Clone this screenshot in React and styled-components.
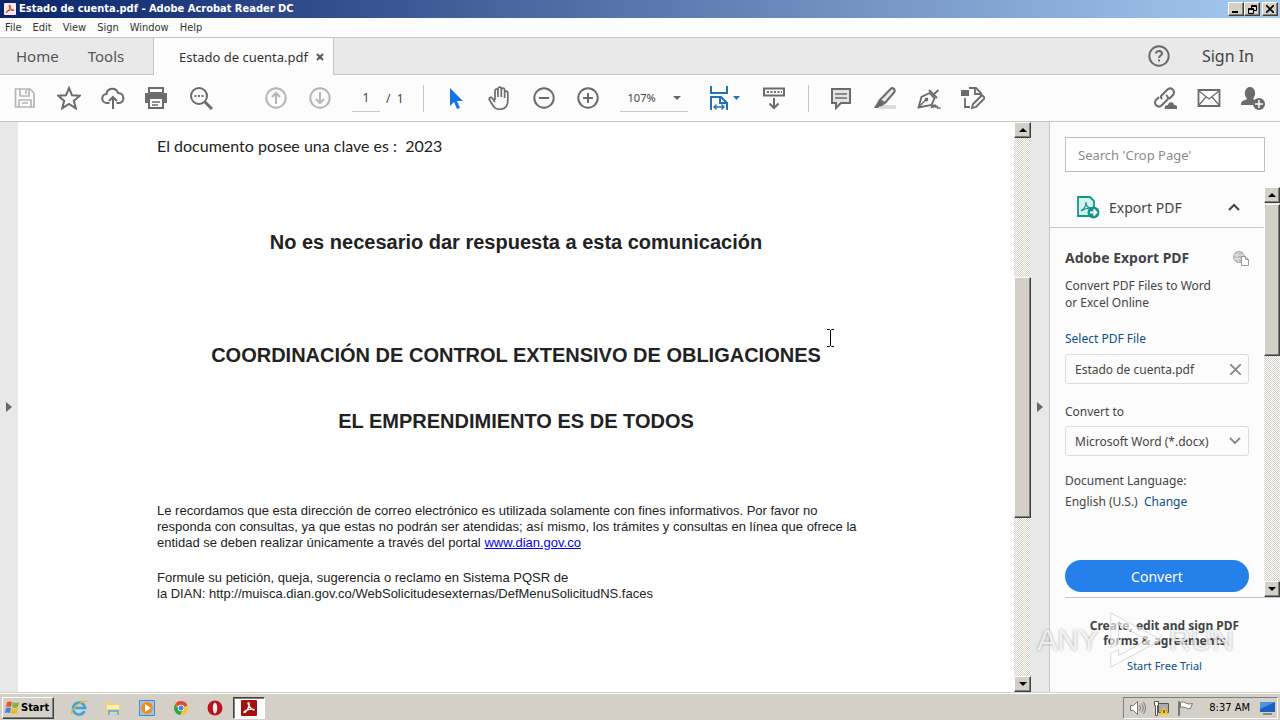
import React from "react";
import styled, { createGlobalStyle } from "styled-components";

const ui = `"Noto Sans", "Open Sans", sans-serif`;
const tahoma = `"DejaVu Sans Condensed", "DejaVu Sans", sans-serif`;

const Global = createGlobalStyle`
  * { box-sizing: border-box; }
  body { margin: 0; font-family: ${ui}; color: #444; background: #fff; }
  button, input, select { font: inherit; color: inherit; margin: 0; }
  button { border: 0; padding: 0; background: none; cursor: pointer; }
  h1, h2, h3, p { margin: 0; }
  a { color: #0d4f8c; text-decoration: none; }
  svg { display: block; flex: none; }
`;

const Screen = styled.div`
  position: relative;
  min-height: 100vh;
  display: flex;
  flex-direction: column;
`;

const TitleBar = styled.header`
  height: 18px;
  display: flex;
  align-items: center;
  gap: 3px;
  padding: 0 2px 0 4px;
  background: linear-gradient(90deg, #0a246a, #a6caf0);
  color: #fff;
`;
const WindowTitle = styled.h1`
  flex: 1;
  font: bold 11px/16px ${tahoma};
`;
const WindowButtons = styled.div`
  display: flex;
`;
const bevel = `
  background: #d4d0c8;
  border: 1px solid;
  border-color: #fff #404040 #404040 #fff;
  box-shadow: inset -1px -1px 0 #808080;
`;
const CaptionButton = styled.button`
  ${bevel}
  width: 16px;
  height: 14px;
  display: grid;
  place-items: center;
  margin-left: ${(p) => (p.$apart ? "2px" : "0")};
`;

const MenuBar = styled.nav`
  display: flex;
  gap: 11px;
  height: 20px;
  padding: 0 5px;
  background: #fcfcfc;
  border-bottom: 1px solid #c8c8c8;
`;
const MenuItem = styled.button`
  font: 11px/20px ${tahoma};
  color: #333;
`;

const TabBar = styled.div`
  display: flex;
  height: 37px;
  background: #e9e9e9;
`;
const HomeTabs = styled.div`
  width: 154px;
  display: flex;
  gap: 29px;
  padding-left: 16px;
  border-right: 1px solid #c6c6c6;
  border-bottom: 1px solid #c6c6c6;
`;
const Tab = styled.button`
  font-size: 15px;
  color: #555;
`;
const ActiveTab = styled.div`
  width: 180px;
  display: flex;
  align-items: center;
  gap: 8px;
  padding-left: 25px;
  background: #fcfcfc;
  border-right: 1px solid #c6c6c6;
  font-size: 13px;
  color: #333;
  white-space: nowrap;
`;
const Account = styled.div`
  flex: 1;
  display: flex;
  justify-content: flex-end;
  align-items: center;
  gap: 31px;
  padding-right: 26px;
  border-bottom: 1px solid #c6c6c6;
`;
const SignIn = styled.button`
  font-size: 16px;
  color: #444;
`;
const IconButton = styled.button`
  flex: none;
  display: grid;
  place-items: center;
  color: #6b6b6b;
`;

const Toolbar = styled.div`
  height: 47px;
  display: flex;
  align-items: center;
  padding: 0 15px 0 13px;
  background: #fcfcfc;
  border-bottom: 1px solid #c6c6c6;
`;
const ToolGroup = styled.div`
  display: flex;
  align-items: center;
  gap: 20px;
  margin-left: ${(p) => p.$before || 0}px;
`;
const Push = styled.div`
  flex: 1;
`;
const Divider = styled.span`
  width: 1px;
  height: 27px;
  margin-left: ${(p) => p.$before}px;
  background: #c6c6c6;
`;
const PageField = styled.label`
  display: flex;
  align-items: center;
  gap: 6px;
  margin-left: 20px;
  font-size: 12px;
  line-height: 27px;
  white-space: pre;
`;
const PageInput = styled.input`
  width: 28px;
  height: 27px;
  padding: 0;
  border: 0;
  border-bottom: 1px solid #c6c6c6;
  background: none;
  text-align: center;
`;
const ZoomField = styled.div`
  display: flex;
  align-items: center;
  width: 68px;
  margin-left: 20px;
  padding-right: 7px;
  border-bottom: 1px solid #c6c6c6;
  color: #666;
`;
const ZoomSelect = styled.select`
  flex: 1;
  min-width: 0;
  height: 26px;
  padding: 0 0 0 8px;
  border: 0;
  background: none;
  appearance: none;
  font-size: 11px;
  color: #444;
`;

const Workspace = styled.main`
  flex: 1;
  display: flex;
`;
const Gutter = styled.button`
  width: ${(p) => p.$width}px;
  flex: none;
  display: grid;
  place-items: center;
  background: #e8e8e8;
  border-right: ${(p) => (p.$edge ? "1px solid #c6c6c6" : "0")};
`;
const Page = styled.article`
  flex: 1;
  padding: 13px 139px 24px;
  background: #fff;
  color: #222;
`;
const KeyLine = styled.p`
  font: 16px/22px Lato, sans-serif;
  white-space: pre;
`;
const Notice = styled.h2`
  margin-top: ${(p) => p.$before}px;
  text-align: center;
  font: bold 20px/24px "Liberation Sans", Arial, sans-serif;
  white-space: nowrap;
`;
const Fine = styled.p`
  margin-top: ${(p) => p.$before}px;
  font: 13px/16px "Liberation Sans", Arial, sans-serif;
  white-space: nowrap;
`;
const DocLink = styled.a`
  color: #00e;
  text-decoration: underline;
`;

const ScrollTrack = styled.div`
  width: ${(p) => p.$width}px;
  flex: none;
  display: flex;
  flex-direction: column;
  background: repeating-conic-gradient(#d4d0c8 0 25%, #fff 0 50%) 0 0 / 2px 2px;
`;
const ScrollArrow = styled.button`
  ${bevel}
  height: 16px;
  flex: none;
  display: grid;
  place-items: center;
`;
const Space = styled.div`
  flex: ${(p) => p.$grow};
`;
const Thumb = styled.div`
  ${bevel}
  flex: ${(p) => p.$grow};
`;

const Panel = styled.aside`
  width: 230px;
  flex: none;
  display: flex;
  flex-direction: column;
  background: #fcfcfc;
  font-size: 12px;
`;
const Search = styled.input`
  height: 35px;
  margin: 15px;
  padding: 0 12px;
  border: 1px solid #bdbdbd;
  background: #fff;
  font-size: 13px;
  &::placeholder { color: #8c8c8c; opacity: 1; }
`;
const PanelBody = styled.div`
  flex: 1;
  display: flex;
`;
const PanelScroll = styled.div`
  flex: 1;
  min-width: 0;
`;
const ExportHeader = styled.button`
  width: 100%;
  height: 41px;
  display: flex;
  align-items: center;
  gap: 9px;
  padding: 0 24px 0 26px;
  border-bottom: 1px solid #c6c6c6;
  font-size: 14px;
  text-align: left;
`;
const Grow = styled.span`
  flex: 1;
`;
const Form = styled.form`
  display: flex;
  flex-direction: column;
  padding: 20px 15px 4px;
  line-height: 17px;
  white-space: nowrap;
`;
const FormTitle = styled.h2`
  display: flex;
  justify-content: space-between;
  align-items: center;
  font-size: 14px;
  line-height: 20px;
  margin-bottom: 9px;
`;
const Line = styled.p`
  margin-top: ${(p) => p.$before || 0}px;
`;
const FieldLabel = styled.label`
  margin: 19px 0 6px;
`;
const Field = styled.div`
  display: flex;
  align-items: center;
  height: 30px;
  padding: 0 7px 0 9px;
  border: 1px solid #dcdcdc;
  border-radius: 3px;
  color: #888;
`;
const FileName = styled.span`
  flex: 1;
  color: #444;
`;
const FormatSelect = styled.select`
  flex: 1;
  min-width: 0;
  padding: 0;
  border: 0;
  background: none;
  appearance: none;
  color: #444;
`;
const ConvertButton = styled.button`
  height: 32px;
  margin-top: 50px;
  border-radius: 16px;
  background: #2680eb;
  color: #fff;
  font-size: 14px;
`;
const Promo = styled.section`
  height: 95px;
  margin-left: 15px;
  padding: 20px 16px 0 0;
  border-top: 1px solid #c6c6c6;
  text-align: center;
  font-size: 11px;
  line-height: 15px;
`;
const PromoTitle = styled.h3`
  font-size: 12px;
  line-height: 15px;
  margin-bottom: 10px;
`;

const Watermark = styled.div`
  position: absolute;
  right: 46px;
  bottom: 48px;
  display: flex;
  align-items: center;
  gap: 6px;
  font: 30px/64px "Liberation Sans", Arial, sans-serif;
  color: rgba(255, 255, 255, 0.8);
  text-shadow: 0 0 3px rgba(0, 0, 0, 0.35);
  pointer-events: none;
`;

const Taskbar = styled.footer`
  height: 28px;
  display: flex;
  align-items: center;
  padding: 2px 2px 0;
  background: #d4d0c8;
  border-top: 1px solid #d4d0c8;
  box-shadow: inset 0 1px 0 #fff;
`;
const StartButton = styled.button`
  ${bevel}
  width: 52px;
  height: 22px;
  display: flex;
  align-items: center;
  gap: 1px;
  padding-left: 1px;
  margin-right: 9px;
  font: bold 11px/16px ${tahoma};
  color: #000;
`;
const TaskButton = styled.button`
  width: 32px;
  height: 22px;
  margin-right: 2px;
  display: grid;
  place-items: center;
  ${(p) =>
    p.$active &&
    `background: #fff; border: 1px solid; border-color: #404040 #fff #fff #404040; box-shadow: inset 1px 1px 0 #808080;`}
`;
const Tray = styled.div`
  height: 22px;
  display: flex;
  align-items: center;
  gap: 7px;
  padding: 0 1px 0 5px;
  border: 1px solid;
  border-color: #808080 #fff #fff #808080;
  font: 11px/16px ${tahoma};
  color: #000;
`;
const Clock = styled.time`
  margin: 0 2px 0 8px;
`;

const Icon = ({ size = 24, w = 2, children, ...rest }) => (
  <svg width={size} height={size} viewBox="0 0 24 24" fill="none" stroke="currentColor" strokeWidth={w} aria-hidden="true" {...rest}>
    {children}
  </svg>
);
const Triangle = ({ points, w = 8, h = 8, color = "#000" }) => (
  <svg width={w} height={h} viewBox="0 0 8 8" preserveAspectRatio="none" fill={color} aria-hidden="true">
    <path d={points} />
  </svg>
);
const UP = "M0 6L4 2L8 6Z";
const DOWN = "M0 2L4 6L8 2Z";
const RIGHT = "M0 0L8 4L0 8Z";

const AcrobatMark = ({ size, bg, fg }) => (
  <svg width={size} height={size} viewBox="0 0 16 16" aria-hidden="true">
    <rect width="16" height="16" rx="1" fill={bg} />
    <path d="M3 12.500C2 11 9.500 8 13 9.500C14 11 8 8.500 7 3.500C7 1.500 9 3 8 6C7 9 4.500 13 3 12.500Z" fill="none" stroke={fg} strokeWidth="1.300" />
  </svg>
);

const FileTools = () => (
  <ToolGroup>
    <IconButton aria-label="Save">
      <Icon color="#b5b5b5" w={1.7}>
        <path d="M2.500 3h14.500l4 4v14H2.500zM7 3v7h9V3M13 4v4M6 21v-7h12v7M9 17h6" />
      </Icon>
    </IconButton>
    <IconButton aria-label="Star">
      <Icon><path d="M12 2l3 7.300 7.800.500-6 5 2 7.500L12 18l-6.800 4.300 2-7.500-6-5L9 9.300z" /></Icon>
    </IconButton>
    <IconButton aria-label="Upload">
      <Icon><path d="M8.500 17H6a4.500 4.500 0 0 1-.500-9C6.500 1.500 15 1 17 7c7 0 7 10 1 10h-2.500M12 23V11M8 15l4-4 4 4" /></Icon>
    </IconButton>
    <IconButton aria-label="Print">
      <Icon>
        <path d="M4 2h14v5H4z" />
        <path d="M0 7h22v10h-4v-4H4v4H0z" fill="currentColor" stroke="none" />
        <path d="M4 13v9h14v-9" /><path d="M7 16h8M7 19h6" strokeWidth="1.500" />
      </Icon>
    </IconButton>
    <IconButton aria-label="Find">
      <Icon>
        <circle cx="10" cy="10" r="8" /><path d="M16 16l7 7" strokeWidth="3" />
        <path d="M5.500 10h2M9 10h2M12.500 10h2" />
      </Icon>
    </IconButton>
  </ToolGroup>
);

const CircleIcon = ({ d, color, label, w = 2 }) => (
  <IconButton aria-label={label}>
    <Icon color={color} w={w}><circle cx="12" cy="12" r="9.700" /><path d={d} /></Icon>
  </IconButton>
);

const Scrollbar = ({ width, parts }) => (
  <ScrollTrack $width={width}>
    <ScrollArrow aria-label="Scroll up"><Triangle points={UP} /></ScrollArrow>
    <Space $grow={parts[0]} />
    <Thumb $grow={parts[1]} />
    <Space $grow={parts[2]} />
    <ScrollArrow aria-label="Scroll down"><Triangle points={DOWN} /></ScrollArrow>
  </ScrollTrack>
);

const Cursor = styled.svg`
  position: absolute;
  left: 826px;
  top: 329px;
  pointer-events: none;
`;

export default function App() {
  return (
    <Screen>
      <Global />
      <TitleBar>
        <AcrobatMark size={12} bg="#fbe9e7" fg="#c8201a" />
        <WindowTitle>Estado de cuenta.pdf - Adobe Acrobat Reader DC</WindowTitle>
        <WindowButtons>
          <CaptionButton aria-label="Minimize"><svg width="8" height="8"><path d="M0 7h6" stroke="#000" strokeWidth="2" /></svg></CaptionButton>
          <CaptionButton aria-label="Restore"><svg width="9" height="9" fill="none" stroke="#000"><path d="M3.500 3V.500h5v5H6M3 1.500h6M.500 3.500h5v5h-5zM0 4.500h6" /></svg></CaptionButton>
          <CaptionButton $apart aria-label="Close"><svg width="8" height="8" stroke="#000" strokeWidth="1.600"><path d="M0 0L8 8M8 0L0 8" /></svg></CaptionButton>
        </WindowButtons>
      </TitleBar>
      <MenuBar>
        {["File", "Edit", "View", "Sign", "Window", "Help"].map((m) => <MenuItem key={m}>{m}</MenuItem>)}
      </MenuBar>
      <TabBar>
        <HomeTabs><Tab>Home</Tab><Tab>Tools</Tab></HomeTabs>
        <ActiveTab>
          Estado de cuenta.pdf
          <IconButton aria-label="Close tab"><svg width="8" height="8" stroke="#555" strokeWidth="2"><path d="M1 1L7 7M7 1L1 7" /></svg></IconButton>
        </ActiveTab>
        <Account>
          <IconButton aria-label="Help">
            <Icon><circle cx="12" cy="12" r="9.700" /><path d="M9 9.500c0-3.500 6-3.200 6 0C15 11.500 12 11.500 12 14M12 15.500v2" /></Icon>
          </IconButton>
          <SignIn>Sign In</SignIn>
        </Account>
      </TabBar>
      <Toolbar>
        <FileTools />
        <ToolGroup $before={51}>
          <CircleIcon label="Previous page" color="#b5b5b5" d="M12 18V7M8 11l4-4 4 4" />
          <CircleIcon label="Next page" color="#b5b5b5" d="M12 6v11M8 13l4 4 4-4" />
        </ToolGroup>
        <PageField>
          <PageInput aria-label="Page number" defaultValue="1" />
          {"/  1"}
        </PageField>
        <Divider $before={19} />
        <ToolGroup $before={20}>
          <IconButton aria-label="Select">
            <Icon><path d="M6 2v18l4-4 3 7 3-1-3-7h6z" fill="#1473e6" stroke="none" /></Icon>
          </IconButton>
          <IconButton aria-label="Hand">
            <Icon w={1.7}><path d="M7 14V5c0-2.500 3-2.500 3 0v6V3c0-2.500 3.300-2.500 3.300 0v8V4c0-2.500 3.300-2.500 3.300 0v8V7c0-2.500 3.200-2.500 3.200 0v8c0 10-12 10-14.500 5L1.500 14c-1-2.500 1.500-3.500 3-1.500L7 16" /></Icon>
          </IconButton>
          <CircleIcon label="Zoom out" d="M7 12h10" />
          <CircleIcon label="Zoom in" d="M7 12h10M12 7v10" />
        </ToolGroup>
        <ZoomField>
          <ZoomSelect aria-label="Zoom level"><option>107%</option></ZoomSelect>
          <Triangle points={DOWN} color="#666" />
        </ZoomField>
        <ToolGroup $before={20}>
          <IconButton aria-label="Fit width">
            <svg width="32" height="26" viewBox="0 0 32 26" fill="none" stroke="#2272b9" strokeWidth="2">
              <path d="M3 1v7h16V1M3 25V12h10l6 6v7M12 12v6h6" />
              <path d="M6 22h10M8.500 19.500L6 22l2.500 2.500M13.500 19.500L16 22l-2.500 2.500" strokeWidth="1.300" />
              <path d="M25 11h7l-3.500 4z" fill="#2272b9" stroke="none" />
            </svg>
          </IconButton>
          <IconButton aria-label="Scroll mode">
            <svg width="28" height="24" viewBox="0 0 28 24" fill="none" stroke="currentColor" strokeWidth="2" aria-hidden="true">
              <path d="M4 2.500h20v7H4zM14 12v10M9.500 17.500l4.500 4.500 4.500-4.500" /><path d="M7 6h15" strokeDasharray="2 1.500" />
            </svg>
          </IconButton>
        </ToolGroup>
        <Divider $before={20} />
        <ToolGroup $before={20}>
          <IconButton aria-label="Comment">
            <Icon><path d="M3 3h18v14h-9l-5 5v-5H3z" fill="#e3e3e3" /><path d="M6 8h12M6 12h12" strokeWidth="1.500" /></Icon>
          </IconButton>
          <IconButton aria-label="Highlight">
            <Icon><path d="M9 19h14v4H5z" fill="#dcdcdc" stroke="none" /><path d="M7 14L17.500 3c2-2 5 0 4 3L12 17z" fill="#e8e8e8" /><path d="M6 13.500l6 4.500-3 2-3 1-1 1H1z" fill="currentColor" stroke="none" /></Icon>
          </IconButton>
          <IconButton aria-label="Sign document">
            <Icon w={1.8}>
              <path d="M1.500 21.500L4.500 11l8-4 5 5.500-3 6.500z" /><path d="M1.500 21.500L8.500 14" strokeWidth="1.300" /><circle cx="9.500" cy="13.500" r="1" />
              <path d="M12 4l8 8" strokeWidth="2" /><path d="M17 8l4.500-4" />
              <path d="M14 22c2-4 3-4 2 0 2-4 3-4 2.500-.500 1.500-2 2-1.500 2 .500h3" strokeWidth="1.500" />
            </Icon>
          </IconButton>
          <IconButton aria-label="More tools">
            <Icon w={1.800}><path d="M8 2h7l5 5v3M4 12v9h5M14 2v6h6" /><path d="M0 4h8v6H0z" fill="currentColor" stroke="none" /><path d="M11 22l1-4 9-9 3 3-9 9z" fill="#eee" /></Icon>
          </IconButton>
        </ToolGroup>
        <Push />
        <ToolGroup>
          <IconButton aria-label="Share link">
            <Icon>
              <path d="M9 13c-2-2-1-3 0-4l5-5c4-4 9 1 6 5l-4 4M13 9c3 2 2 4 1 5l-5 5c-4 4-9-1-6-5l3-3" />
              <path d="M12 23c-1-3 1-4 3-4 1-4 6-3 6 0 3 0 4 2 3 4z" fill="currentColor" stroke="none" />
            </Icon>
          </IconButton>
          <IconButton aria-label="Email">
            <Icon w={1.800}><path d="M1.500 4h21v16h-21z" /><path d="M2 5l10 8 10-8M2 19l7-8M22 19l-7-8" strokeWidth="1.200" /></Icon>
          </IconButton>
          <IconButton aria-label="Share with people">
            <Icon>
              <path d="M0 19c0-5 3-4 6-6-4-5-2-12 3-12s7 7 3 12l3 2c-3 1-3 2-3 4z" fill="currentColor" stroke="none" />
              <circle cx="18" cy="18" r="6" fill="currentColor" stroke="none" /><path d="M18 14v8M14 18h8" stroke="#fff" strokeWidth="1.500" />
            </Icon>
          </IconButton>
        </ToolGroup>
      </Toolbar>
      <Workspace>
        <Gutter $width={18} aria-label="Open navigation pane"><Triangle points={RIGHT} w={6} h={10} color="#666" /></Gutter>
        <Page>
          <KeyLine>{"El documento posee una clave es :  2023"}</KeyLine>
          <Notice $before={73}>No es necesario dar respuesta a esta comunicación</Notice>
          <Notice $before={89}>COORDINACIÓN DE CONTROL EXTENSIVO DE OBLIGACIONES</Notice>
          <Notice $before={42}>EL EMPRENDIMIENTO ES DE TODOS</Notice>
          <Fine $before={70}>
            Le recordamos que esta dirección de correo electrónico es utilizada solamente con fines informativos. Por favor no<br />
            responda con consultas, ya que estas no podrán ser atendidas; así mismo, los trámites y consultas en línea que ofrece la<br />
            entidad se deben realizar únicamente a través del portal <DocLink href="#portal">www.dian.gov.co</DocLink>
          </Fine>
          <Fine $before={19}>
            Formule su petición, queja, sugerencia o reclamo en Sistema PQSR de<br />
            la DIAN: http://muisca.dian.gov.co/WebSolicitudesexternas/DefMenuSolicitudNS.faces
          </Fine>
        </Page>
        <Scrollbar width={17} parts={[140, 239, 159]} />
        <Gutter $width={19} $edge aria-label="Collapse tools pane"><Triangle points={RIGHT} w={6} h={10} color="#666" /></Gutter>
        <Panel>
          <Search aria-label="Search tools" placeholder="Search 'Crop Page'" />
          <PanelBody>
            <PanelScroll>
              <ExportHeader>
                <svg width="24" height="24" viewBox="0 0 24 24" fill="none" stroke="#159588" strokeWidth="1.800" aria-hidden="true">
                  <path d="M2 2h12l4 4v15H2z" fill="#d5f1ee" />
                  <path d="M5 16c3-2 5-5 5-9 0 4 2 6 5 6-4 0-7 1-10 3z" strokeWidth="1.200" />
                  <circle cx="17.500" cy="17.500" r="6" fill="#159588" stroke="none" />
                  <path d="M14 17.500h6M17.500 14.500l3 3-3 3" stroke="#fff" />
                </svg>
                Export PDF
                <Grow />
                <svg width="12" height="8" fill="none" stroke="#444" strokeWidth="2"><path d="M1 7l5-5 5 5" /></svg>
              </ExportHeader>
              <Form onSubmit={(e) => e.preventDefault()}>
                <FormTitle>
                  Adobe Export PDF
                  <svg width="16" height="17" viewBox="0 0 16 17" fill="none" stroke="#aaa" aria-hidden="true">
                    <circle cx="6" cy="7" r="5.500" fill="#bbb" /><path d="M1 5h10M1 9h10M6 2c-3 3-3 7 0 10" stroke="#eee" />
                    <path d="M8.500 6.500h4l3 3v6h-7z" fill="#fff" stroke="#999" /><path d="M12.500 6.500v3h3" stroke="#999" />
                  </svg>
                </FormTitle>
                <p>Convert PDF Files to Word<br />or Excel Online</p>
                <Line $before={19}><a href="#select">Select PDF File</a></Line>
                <Line $before={7} as={Field}>
                  <FileName>Estado de cuenta.pdf</FileName>
                  <IconButton type="button" aria-label="Remove file"><svg width="11" height="11" stroke="#888" strokeWidth="1.800"><path d="M0 0L11 11M11 0L0 11" /></svg></IconButton>
                </Line>
                <FieldLabel htmlFor="format">Convert to</FieldLabel>
                <Field>
                  <FormatSelect id="format"><option>Microsoft Word (*.docx)</option></FormatSelect>
                  <svg width="12" height="8" fill="none" stroke="#888" strokeWidth="1.800"><path d="M1 1l5 5 5-5" /></svg>
                </Field>
                <Line $before={16}>Document Language:</Line>
                <Line $before={4}>English (U.S.)&nbsp; <a href="#language">Change</a></Line>
                <ConvertButton>Convert</ConvertButton>
              </Form>
            </PanelScroll>
            <Scrollbar width={16} parts={[1, 151, 226]} />
          </PanelBody>
          <Promo>
            <PromoTitle>Create, edit and sign PDF<br />forms &amp; agreements</PromoTitle>
            <a href="#trial">Start Free Trial</a>
          </Promo>
        </Panel>
      </Workspace>
      <Taskbar>
        <StartButton>
          <svg width="16" height="16" viewBox="0 0 16 16" aria-hidden="true">
            <path d="M3 2q3-1 5 0L7 7q-3-1-5 0z" fill="#e8562a" /><path d="M9 2q3 2 6 0l-1 5q-3 2-6 0z" fill="#7db83a" />
            <path d="M2 8q3-1 5 0l-1 5q-3-1-5 0z" fill="#3f86d6" /><path d="M8 8q3 2 6 0l-1 5q-3 2-6 0z" fill="#f3b722" />
          </svg>
          Start
        </StartButton>
        <TaskButton aria-label="Internet Explorer">
          <svg width="18" height="18" viewBox="0 0 18 18" fill="none"><path d="M14.500 12a6 6 0 1 1 .500-3H5" stroke="#39a3dc" strokeWidth="2.600" /><path d="M2 15C-1 11 15-1 17 3" stroke="#e8b53a" strokeWidth="1.300" /></svg>
        </TaskButton>
        <TaskButton aria-label="File Explorer">
          <svg width="18" height="18" viewBox="0 0 18 18"><path d="M2 3h6l1 2h7v9H2z" fill="#eed47c" /><path d="M3 6h12v4H3z" fill="#f9eeb5" /><path d="M4 16v-5h11v5h-2v-3H6v3z" fill="#69b4d9" /></svg>
        </TaskButton>
        <TaskButton aria-label="Media Player">
          <svg width="16" height="16" viewBox="0 0 16 16"><path d="M.500.500h15v15H.500z" fill="#9cc6ea" stroke="#4689c8" /><circle cx="8" cy="8" r="6" fill="#f28a1c" /><path d="M6 4l6 4-6 4z" fill="#fff" /></svg>
        </TaskButton>
        <TaskButton aria-label="Chrome">
          <svg width="14" height="14" viewBox="0 0 14 14"><circle cx="7" cy="7" r="7" fill="#f6c62d" /><path d="M7 7L1 3.500A7 7 0 0 1 13.500 4.500z" fill="#dd4b3e" /><path d="M1 3.500A7 7 0 0 0 6 14l3-5-4-1z" fill="#30a451" /><circle cx="7" cy="7" r="3.200" fill="#fff" /><circle cx="7" cy="7" r="2.500" fill="#4285d8" /></svg>
        </TaskButton>
        <TaskButton aria-label="Opera">
          <svg width="16" height="16" viewBox="0 0 16 16"><circle cx="8" cy="8" r="7.500" fill="#b9131c" /><ellipse cx="8" cy="8" rx="2.200" ry="5.500" fill="#eee" /></svg>
        </TaskButton>
        <TaskButton $active aria-label="Acrobat Reader"><AcrobatMark size={16} bg="#a8100c" fg="#fff" /></TaskButton>
        <Push />
        <Tray>
          <svg width="17" height="16" viewBox="0 0 17 16" fill="#fff" stroke="#777"><path d="M1.500 5.500h3l4-4v13l-4-4h-3z" /><path d="M10.500 5q2 3 0 6M12.500 3.500q3.500 4.500 0 9M14.500 2q4 6 0 12" fill="none" /></svg>
          <svg width="17" height="16" viewBox="0 0 17 16"><path d="M5.500 3.500h10v9h-10z" fill="#aaa" stroke="#555" /><path d="M1.500 1.500h4v4h-1v10h-2v-10h-1z" fill="#fff" stroke="#555" /><path d="M11 7l5 8H6z" fill="#f6c91c" /><path d="M11 10v3" stroke="#000" /></svg>
          <svg width="17" height="16" viewBox="0 0 17 16" fill="#fff" stroke="#777"><path d="M1.500 1.500h1v14h-1zM3.500 2.500q3-2 6 1 3 1 6 0l-2 5q-3 1-5-1-3-1-5 0z" /></svg>
          <Clock>8:37 AM</Clock>
          <svg width="17" height="16" viewBox="0 0 17 16"><path d="M1 2h15v10H1z" fill="#1d5fc0" /><path d="M1 2h15L1 9z" fill="#4c92e6" /><path d="M4 13h9v2H4z" fill="#888" /></svg>
        </Tray>
      </Taskbar>
      <Cursor width="9" height="18" fill="none" stroke="#000"><path d="M1 .500h2.500l1 1 1-1H8M4.500 1v16M1 17.500h2.500l1-1 1 1H8" /></Cursor>
      <Watermark aria-hidden="true">
        ANY
        <svg width="58" height="64" viewBox="0 0 60 64" fill="rgba(255,255,255,.6)" stroke="#d8d8d8" strokeWidth="1" fillRule="evenodd"><path d="M6 4L58 32L6 60V46L14 42V48L44 32L14 16V36L6 40Z" /></svg>
        RUN
      </Watermark>
    </Screen>
  );
}
